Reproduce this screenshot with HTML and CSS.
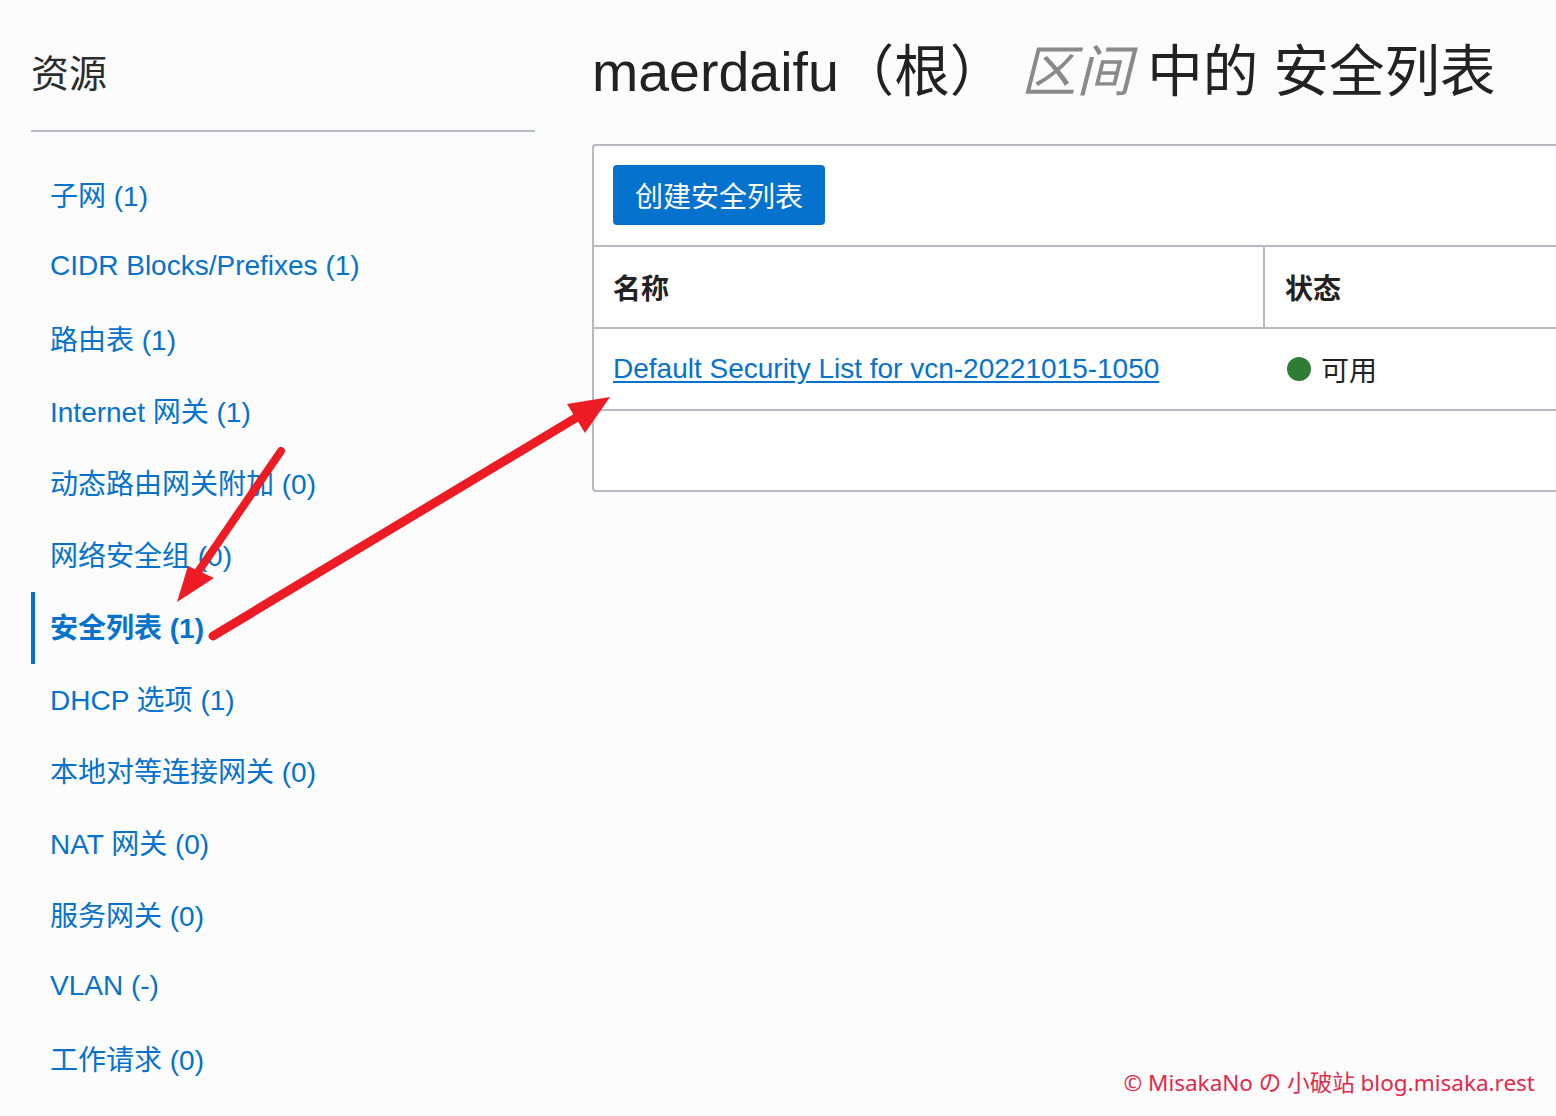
FILE: index.html
```html
<!DOCTYPE html>
<html lang="zh-CN">
<head>
<meta charset="utf-8">
<title>安全列表</title>
<link rel="stylesheet" href="styles.css">
</head>
<body>
<div class="page">
  <aside class="sidebar">
    <h2 class="side-title">资源</h2>
    <nav class="side-nav">
      <a class="nav-item">子网 (1)</a>
      <a class="nav-item">CIDR Blocks/Prefixes (1)</a>
      <a class="nav-item">路由表 (1)</a>
      <a class="nav-item">Internet 网关 (1)</a>
      <a class="nav-item">动态路由网关附加 (0)</a>
      <a class="nav-item">网络安全组 (0)</a>
      <a class="nav-item active">安全列表 (1)</a>
      <a class="nav-item">DHCP 选项 (1)</a>
      <a class="nav-item">本地对等连接网关 (0)</a>
      <a class="nav-item">NAT 网关 (0)</a>
      <a class="nav-item">服务网关 (0)</a>
      <a class="nav-item">VLAN (-)</a>
      <a class="nav-item">工作请求 (0)</a>
    </nav>
  </aside>
  <main class="main">
    <h1 class="page-title">maerdaifu（根） <em class="scope">区间</em> 中的 安全列表</h1>
    <section class="card">
      <div class="toolbar">
        <button class="btn-primary">创建安全列表</button>
      </div>
      <div class="table">
        <div class="row head">
          <div class="cell name">名称</div>
          <div class="cell status">状态</div>
        </div>
        <div class="row">
          <div class="cell name"><a class="link">Default Security List for vcn-20221015-1050</a></div>
          <div class="cell status"><span class="dot"></span>可用</div>
        </div>
        <div class="row empty"></div>
      </div>
    </section>
  </main>
</div>
<svg class="annot" width="1556" height="1116" viewBox="0 0 1556 1116">
  <line x1="281" y1="451" x2="198" y2="572" stroke="#ed1c24" stroke-width="8" stroke-linecap="round"/>
  <polygon points="177,602 214,578 188,566" fill="#ed1c24"/>
  <line x1="213" y1="636" x2="584" y2="413" stroke="#ed1c24" stroke-width="9" stroke-linecap="round"/>
  <polygon points="610,397 567,404 585,433" fill="#ed1c24"/>
</svg>
<div class="watermark">© MisakaNo の 小破站 blog.misaka.rest</div>
</body>
</html>
```

FILE: styles.css
```css
html, body {
  margin: 0;
  padding: 0;
}
body {
  background: #fcfcfd;
  font-family: "Liberation Sans", Arial, "Noto Sans CJK SC", sans-serif;
  color: #222;
  width: 1556px;
  height: 1116px;
  overflow: hidden;
  position: relative;
}
.page {
  display: flex;
  padding-left: 31px;
  gap: 57px;
}
.sidebar {
  width: 504px;
  flex: none;
}
.side-title {
  margin: 0;
  padding-top: 50px;
  box-sizing: border-box;
  height: 132px;
  font-size: 38px;
  font-weight: normal;
  line-height: 48px;
  color: #2c2c2c;
  border-bottom: 2px solid #b6bbc3;
}
.side-nav {
  display: flex;
  flex-direction: column;
  padding-top: 28px;
}
.nav-item {
  display: flex;
  align-items: center;
  box-sizing: border-box;
  height: 72px;
  padding-left: 15px;
  padding-bottom: 4px;
  font-size: 28px;
  color: #0572ce;
  border-left: 4px solid transparent;
  white-space: nowrap;
}
.nav-item.active {
  font-weight: bold;
  border-left-color: #0572ce;
}
.main {
  flex: none;
  width: 1100px;
}
.page-title {
  margin: 0;
  padding-top: 36px;
  height: 144px;
  box-sizing: border-box;
  font-size: 55.5px;
  font-weight: normal;
  line-height: 72px;
  color: #222;
  white-space: nowrap;
}
.scope {
  color: #8a8a8a;
  font-style: italic;
}
.card {
  width: 1100px;
  background: #fff;
  border: 2px solid #b6bbc3;
  border-radius: 4px;
}
.toolbar {
  padding: 19px 19px 20px;
}
.btn-primary {
  display: block;
  height: 60px;
  padding: 0 22px;
  border: none;
  border-radius: 4px;
  background: #0572ce;
  color: #fff;
  font-family: "Liberation Sans", "Noto Sans CJK SC", sans-serif;
  font-size: 28px;
}
.row {
  display: grid;
  grid-template-columns: 671px 1fr;
  border-top: 2px solid #b6bbc3;
  height: 80px;
}
.row.empty {
  display: block;
  height: 79px;
}
.cell {
  display: flex;
  align-items: center;
  padding-left: 19px;
  font-size: 28px;
  white-space: nowrap;
}
.row.head .cell {
  font-weight: bold;
  color: #222;
}
.row.head .cell.name {
  border-right: 2px solid #b6bbc3;
}
.cell.status {
  padding-left: 20px;
}
.row:not(.head) .cell.status {
  padding-left: 22px;
}
.link {
  color: #0572ce;
  text-decoration: underline;
  text-underline-offset: 3px;
}
.dot {
  display: inline-block;
  width: 24px;
  height: 24px;
  border-radius: 50%;
  background: #2f7d35;
  margin-right: 10px;
}
.annot {
  position: absolute;
  left: 0;
  top: 0;
  pointer-events: none;
}
.watermark {
  position: absolute;
  right: 21px;
  bottom: 18px;
  font-size: 22.5px;
  color: #e3284a;
  font-family: "Noto Sans", "Noto Sans CJK SC", sans-serif;
}
```
